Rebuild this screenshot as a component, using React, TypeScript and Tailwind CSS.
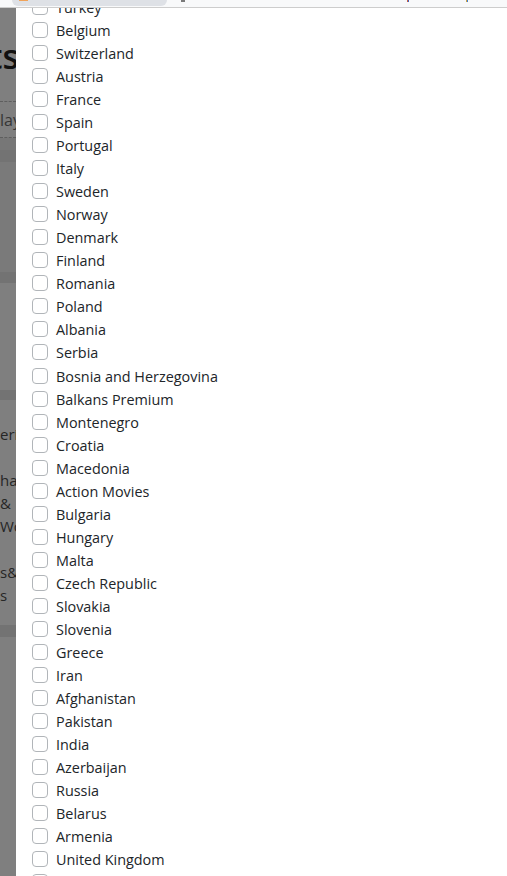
import React from 'react';

const countries = [
  'Turkey', 'Belgium', 'Switzerland', 'Austria', 'France', 'Spain', 'Portugal', 'Italy',
  'Sweden', 'Norway', 'Denmark', 'Finland', 'Romania', 'Poland', 'Albania', 'Serbia',
  'Bosnia and Herzegovina', 'Balkans Premium', 'Montenegro', 'Croatia', 'Macedonia',
  'Action Movies', 'Bulgaria', 'Hungary', 'Malta', 'Czech Republic', 'Slovakia', 'Slovenia',
  'Greece', 'Iran', 'Afghanistan', 'Pakistan', 'India', 'Azerbaijan', 'Russia', 'Belarus',
  'Armenia', 'United Kingdom', 'Germany'
];

// bits of the dimmed page that peek out left of the drawer
const pageLines = ['erip', '', 'har', '&', 'Wo', '', 's&', 's'];

const BrowserBar: React.FC = () => (
  <div className="flex h-[8px] shrink-0 items-start bg-[#f8f9fa] border-b border-[#cdcdcd]">
    <div className="ml-[12px] flex h-[6px] w-[155px] items-start rounded-b-[6px] bg-[#dee1e6] pl-[7px]">
      <span className="h-[1px] w-[9px] bg-[#f0a35a]" />
    </div>
    <span className="ml-[14px] h-[2px] w-[4px] bg-[#7a7a7a]" />
    <span className="ml-[222px] h-[2px] w-[1px] bg-[#d06040]" />
    <span className="h-[2px] w-[1px] bg-[#4060c0]" />
    <span className="ml-[57px] h-[2px] w-[1px] bg-[#d0a040]" />
    <span className="h-[2px] w-[1px] bg-[#4080d0]" />
  </div>
);

const DimmedPage: React.FC = () => (
  <div className="w-[16px] shrink-0 overflow-hidden bg-[#7f7f7f] text-[#262626] font-['Open_Sans',sans-serif]">
    <div className="h-[28px]" />
    <div className="h-[40px] leading-[40px] whitespace-nowrap text-[34px] font-semibold text-[#111111]">
      <span className="-ml-[11px] inline-block">ts</span>
    </div>
    <div className="h-[26px] border-b border-dashed border-[#5e5e5e]" />
    <div className="h-[36px] flex items-center whitespace-nowrap text-[16px] text-[#363636] border-b border-dashed border-[#5e5e5e]">
      lay
    </div>
    <div className="h-[12px] bg-[#777777]" />
    <div className="h-[12px] bg-[#737373]" />
    <div className="h-[110px] bg-[#7a7a7a]" />
    <div className="h-[11px] bg-[#737373]" />
    <div className="h-[107px]" />
    <div className="h-[10px] bg-[#737373]" />
    <div className="h-[23px]" />
    {pageLines.map((line, i) => (
      <div key={i} className="h-[23px] leading-[23px] whitespace-nowrap text-[15px]">
        {line}
      </div>
    ))}
    <div className="h-[18px]" />
    <div className="h-[12px] bg-[#737373]" />
  </div>
);

const CountryRow: React.FC<{ name: string }> = ({ name }) => (
  <label className="flex h-[23.04px] items-start gap-2">
    <span className="mt-[3px] h-4 w-4 shrink-0 rounded-[4px] border border-[#b1b5b9] bg-white" />
    <span className="text-[14.4px] leading-[23.04px] text-[#212529] whitespace-nowrap">{name}</span>
  </label>
);

const App: React.FC = () => {
  return (
    <div className="flex h-[876px] w-[507px] flex-col overflow-hidden bg-white">
      <BrowserBar />
      <div className="flex min-h-0 flex-1">
        <DimmedPage />
        <div className="flex-1 overflow-hidden bg-white font-['Open_Sans',sans-serif]">
          <div className="-mt-[12px] flex flex-col pl-4">
            {countries.map((c) => (
              <CountryRow key={c} name={c} />
            ))}
          </div>
        </div>
      </div>
    </div>
  );
};

export default App;
